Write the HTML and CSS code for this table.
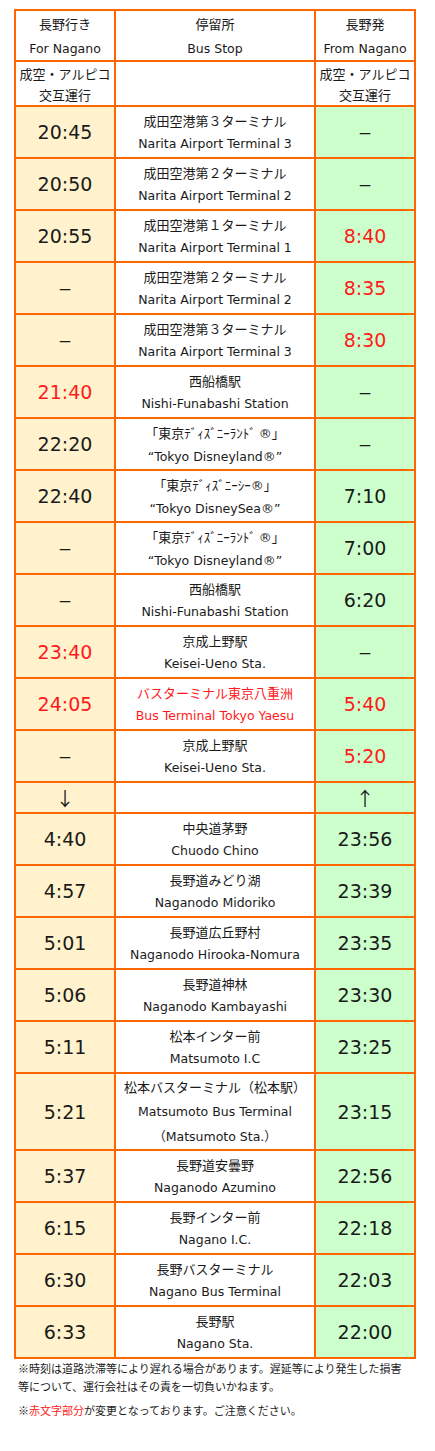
FILE: index.html
```html
<!DOCTYPE html>
<html lang="ja">
<head>
<meta charset="utf-8">
<title>時刻表</title>
<link rel="stylesheet" href="styles.css">
</head>
<body>
<div class="page">
  <div class="tt">
    <div class="c hd hd1"><span class="ja">長野行き</span><span class="en">For Nagano</span></div>
    <div class="c hd hd1"><span class="ja">停留所</span><span class="en">Bus Stop</span></div>
    <div class="c hd hd1"><span class="ja">長野発</span><span class="en">From Nagano</span></div>

    <div class="c hd hd2"><span class="ja">成空・アルピコ</span><span class="ja">交互運行</span></div>
    <div class="c hd hd2"></div>
    <div class="c hd hd2"><span class="ja">成空・アルピコ</span><span class="ja">交互運行</span></div>

    <div class="c to"><span class="t">20:45</span></div>
    <div class="c st"><span class="ja">成田空港第３ターミナル</span><span class="en">Narita Airport Terminal 3</span></div>
    <div class="c fr"><span class="d">–</span></div>

    <div class="c to"><span class="t">20:50</span></div>
    <div class="c st"><span class="ja">成田空港第２ターミナル</span><span class="en">Narita Airport Terminal 2</span></div>
    <div class="c fr"><span class="d">–</span></div>

    <div class="c to"><span class="t">20:55</span></div>
    <div class="c st"><span class="ja">成田空港第１ターミナル</span><span class="en">Narita Airport Terminal 1</span></div>
    <div class="c fr"><span class="t red">8:40</span></div>

    <div class="c to"><span class="d">–</span></div>
    <div class="c st"><span class="ja">成田空港第２ターミナル</span><span class="en">Narita Airport Terminal 2</span></div>
    <div class="c fr"><span class="t red">8:35</span></div>

    <div class="c to"><span class="d">–</span></div>
    <div class="c st"><span class="ja">成田空港第３ターミナル</span><span class="en">Narita Airport Terminal 3</span></div>
    <div class="c fr"><span class="t red">8:30</span></div>

    <div class="c to"><span class="t red">21:40</span></div>
    <div class="c st"><span class="ja">西船橋駅</span><span class="en">Nishi-Funabashi Station</span></div>
    <div class="c fr"><span class="d">–</span></div>

    <div class="c to"><span class="t">22:20</span></div>
    <div class="c st"><span class="ja">「東京ﾃﾞｨｽﾞﾆｰﾗﾝﾄﾞ <span class="reg">®</span>」</span><span class="en">“Tokyo Disneyland<span class="reg">®</span>”</span></div>
    <div class="c fr"><span class="d">–</span></div>

    <div class="c to"><span class="t">22:40</span></div>
    <div class="c st"><span class="ja">「東京ﾃﾞｨｽﾞﾆｰｼｰ<span class="reg">®</span>」</span><span class="en">“Tokyo DisneySea<span class="reg">®</span>”</span></div>
    <div class="c fr"><span class="t">7:10</span></div>

    <div class="c to"><span class="d">–</span></div>
    <div class="c st"><span class="ja">「東京ﾃﾞｨｽﾞﾆｰﾗﾝﾄﾞ <span class="reg">®</span>」</span><span class="en">“Tokyo Disneyland<span class="reg">®</span>”</span></div>
    <div class="c fr"><span class="t">7:00</span></div>

    <div class="c to"><span class="d">–</span></div>
    <div class="c st"><span class="ja">西船橋駅</span><span class="en">Nishi-Funabashi Station</span></div>
    <div class="c fr"><span class="t">6:20</span></div>

    <div class="c to"><span class="t red">23:40</span></div>
    <div class="c st"><span class="ja">京成上野駅</span><span class="en">Keisei-Ueno Sta.</span></div>
    <div class="c fr"><span class="d">–</span></div>

    <div class="c to"><span class="t red">24:05</span></div>
    <div class="c st red"><span class="ja">バスターミナル東京八重洲</span><span class="en">Bus Terminal Tokyo Yaesu</span></div>
    <div class="c fr"><span class="t red">5:40</span></div>

    <div class="c to"><span class="d">–</span></div>
    <div class="c st"><span class="ja">京成上野駅</span><span class="en">Keisei-Ueno Sta.</span></div>
    <div class="c fr"><span class="t red">5:20</span></div>

    <div class="c to"><span class="ar">↓</span></div>
    <div class="c st"></div>
    <div class="c fr"><span class="ar">↑</span></div>

    <div class="c to"><span class="t">4:40</span></div>
    <div class="c st"><span class="ja">中央道茅野</span><span class="en">Chuodo Chino</span></div>
    <div class="c fr"><span class="t">23:56</span></div>

    <div class="c to"><span class="t">4:57</span></div>
    <div class="c st"><span class="ja">長野道みどり湖</span><span class="en">Naganodo Midoriko</span></div>
    <div class="c fr"><span class="t">23:39</span></div>

    <div class="c to"><span class="t">5:01</span></div>
    <div class="c st"><span class="ja">長野道広丘野村</span><span class="en">Naganodo Hirooka-Nomura</span></div>
    <div class="c fr"><span class="t">23:35</span></div>

    <div class="c to"><span class="t">5:06</span></div>
    <div class="c st"><span class="ja">長野道神林</span><span class="en">Naganodo Kambayashi</span></div>
    <div class="c fr"><span class="t">23:30</span></div>

    <div class="c to"><span class="t">5:11</span></div>
    <div class="c st"><span class="ja">松本インター前</span><span class="en">Matsumoto I.C</span></div>
    <div class="c fr"><span class="t">23:25</span></div>

    <div class="c to"><span class="t">5:21</span></div>
    <div class="c st tall"><span class="ja">松本バスターミナル（松本駅）</span><span class="en">Matsumoto Bus Terminal</span><span class="en">（Matsumoto Sta.）</span></div>
    <div class="c fr"><span class="t">23:15</span></div>

    <div class="c to"><span class="t">5:37</span></div>
    <div class="c st"><span class="ja">長野道安曇野</span><span class="en">Naganodo Azumino</span></div>
    <div class="c fr"><span class="t">22:56</span></div>

    <div class="c to"><span class="t">6:15</span></div>
    <div class="c st"><span class="ja">長野インター前</span><span class="en">Nagano I.C.</span></div>
    <div class="c fr"><span class="t">22:18</span></div>

    <div class="c to"><span class="t">6:30</span></div>
    <div class="c st"><span class="ja">長野バスターミナル</span><span class="en">Nagano Bus Terminal</span></div>
    <div class="c fr"><span class="t">22:03</span></div>

    <div class="c to"><span class="t">6:33</span></div>
    <div class="c st"><span class="ja">長野駅</span><span class="en">Nagano Sta.</span></div>
    <div class="c fr"><span class="t">22:00</span></div>
  </div>
  <p class="note">※時刻は道路渋滞等により遅れる場合があります。遅延等により発生した損害等について、運行会社はその責を一切負いかねます。</p>
  <p class="note note2">※<span class="red">赤文字部分</span>が変更となっております。ご注意ください。</p>
</div>
</body>
</html>
```

FILE: styles.css
```css
html, body {
  margin: 0;
  padding: 0;
  background: #ffffff;
}

body {
  font-family: "DejaVu Sans", "Noto Sans CJK JP", sans-serif;
  color: #1a1a1a;
}

.page {
  padding: 9px 0 0 14px;
  width: 402px;
}

.tt {
  display: grid;
  grid-template-columns: 98px 198px 98px;
  grid-template-rows: 49px 43px repeat(13, 50px) 29px repeat(5, 50px) 75px repeat(4, 50px);
  gap: 2px;
  padding: 2px;
  background: #ff6600;
  width: 398px;
}

.c {
  display: flex;
  flex-direction: column;
  justify-content: center;
  align-items: center;
  text-align: center;
  white-space: nowrap;
}

.to { background: #fff2cc; }
.st { background: #ffffff; }
.fr { background: #ccffcc; }
.hd { background: #ffffff; }

.ja {
  display: block;
  font-family: "Noto Sans CJK JP", sans-serif;
  font-size: 13px;
  line-height: 23px;
}

.en {
  display: block;
  font-family: "DejaVu Sans", "Noto Sans CJK JP", sans-serif;
  font-size: 12.5px;
  line-height: 23px;
}

.reg {
  font-family: "DejaVu Sans", sans-serif;
  font-size: 13px;
}

.hd1 .ja, .hd1 .en { line-height: 25px; }
.hd2 .ja { line-height: 21px; }

.tall .ja, .tall .en { line-height: 25px; }

.t {
  font-family: "DejaVu Sans", sans-serif;
  font-size: 19px;
  line-height: 24px;
}

.d {
  font-family: "Liberation Sans", sans-serif;
  font-size: 19px;
  line-height: 24px;
}

.ar {
  font-family: "Noto Sans CJK JP", sans-serif;
  font-size: 19px;
  line-height: 29px;
}

.red { color: #ff1a1a; }

.note {
  margin: 0;
  padding: 0 4px;
  font-family: "Noto Sans CJK JP", sans-serif;
  font-size: 11px;
  line-height: 18px;
  color: #1a1a1a;
}

.note2 { margin-top: 6px; }
```
